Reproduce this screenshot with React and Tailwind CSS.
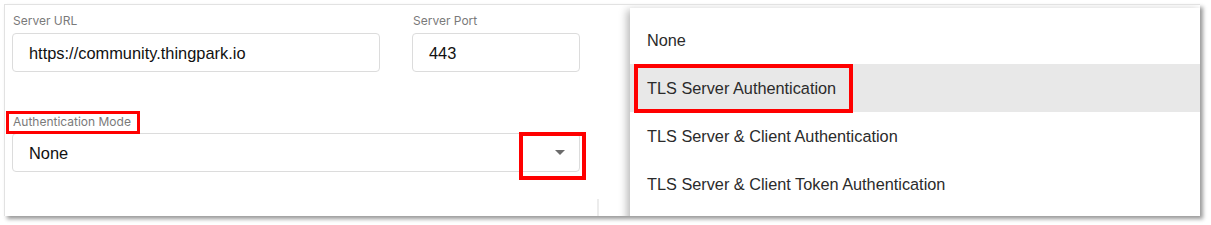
import React from 'react';

const options = [
  'None',
  'TLS Server Authentication',
  'TLS Server & Client Authentication',
  'TLS Server & Client Token Authentication',
];

function Field({ label, value, width }) {
  return (
    <div className="flex flex-col" style={{ width }}>
      <label className="h-[16px] text-[12px] leading-[16px] text-[#7a7a7a] font-['Inter',sans-serif] pl-[1px]">{label}</label>
      <div className="mt-[4px] h-[39px] rounded-[4px] border border-[#dcdcdc] flex items-center pl-[16px] pt-[2px] text-[16.4px] text-[#111] font-['Liberation_Sans',Arial,sans-serif]">
        {value}
      </div>
    </div>
  );
}

export default function App() {
  return (
    <div className="bg-white w-[1211px] h-[225px] pl-[4px] pt-[4px]">
      <div className="relative w-[1196px] h-[212px] bg-white border-t border-l border-[#e2e2e2] shadow-[3px_3px_4px_rgba(0,0,0,0.4)] overflow-hidden">
        <div className="pl-[7px] pt-[8px] w-[590px]">
          <div className="flex gap-[32px]">
            <Field label="Server URL" value="https://community.thingpark.io" width={368} />
            <Field label="Server Port" value="443" width={168} />
          </div>

          <div className="mt-[42px] flex flex-col w-[568px]">
            <label className="h-[16px] text-[12px] leading-[16px] text-[#7a7a7a] font-['Inter',sans-serif] pl-[1px]">Authentication Mode</label>
            <div className="mt-[3px] h-[39px] rounded-[4px] border border-[#dcdcdc] flex items-center justify-between pl-[16px] pr-[14px] text-[16.4px] text-[#111] font-['Liberation_Sans',Arial,sans-serif]">
              <span className="pt-[2px]">None</span>
              <svg width="10" height="5" viewBox="0 0 10 5">
                <path d="M0 0 L10 0 L5 5 Z" fill="#6b6b6b" />
              </svg>
            </div>
          </div>
        </div>

        {/* divider peeking behind menu */}
        <div className="absolute left-[592px] top-[194px] w-[2px] h-[20px] bg-[#ececec]" />

        {/* annotation boxes */}
        <div className="absolute left-[1px] top-[106px] w-[134px] h-[23px] border-[3px] border-[#ff0000]" />
        <div className="absolute left-[514px] top-[127px] w-[67px] h-[48px] border-[4px] border-[#ff0000]" />

        {/* open dropdown */}
        <div className="absolute left-[625px] top-[3px] w-[571px] h-[215px] bg-white shadow-[-3px_2px_8px_rgba(0,0,0,0.28)] pt-[8px] font-['Liberation_Sans',Arial,sans-serif]">
          {options.map((o, i) => (
            <div
              key={o}
              className={`h-[48px] flex items-center pl-[17px] text-[16.3px] text-[#2b2b2b] ${i === 1 ? 'bg-[#e8e8e8]' : ''}`}
            >
              {o}
            </div>
          ))}
          <div className="absolute left-[4px] top-[56px] w-[219px] h-[49px] border-[4px] border-[#ff0000]" />
        </div>
      </div>
    </div>
  );
}
